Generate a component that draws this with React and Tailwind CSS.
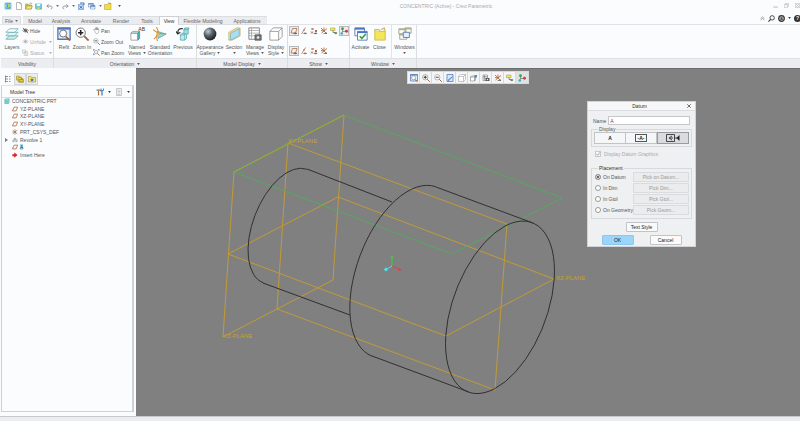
import React, { useState } from "react";

/* ---------- small drawings ---------- */

const Svg = ({ size = 14, className = "", children }) => (
  <svg
    viewBox="0 0 16 16"
    width={size}
    height={size}
    fill="none"
    className={`shrink-0 ${className}`}
    aria-hidden="true"
  >
    {children}
  </svg>
);

const glyphs = {
  app: (
    <>
      <rect x="1" y="1" width="14" height="14" rx="1" fill="#8cc8e4" />
      <path d="M4 3h8v3l-3 2 3 2v3H4l3-5z" fill="#2f8fc4" />
      <path d="M6 4h5l1 4-3 4H6l3-4z" fill="#c9dd4e" />
    </>
  ),
  page: (
    <>
      <path d="M3 1h7l3 3v11H3z" fill="#fff" stroke="#777" />
      <path d="M10 1v3h3" stroke="#777" />
    </>
  ),
  open: (
    <>
      <path d="M1 14V4h5l1 2h6v8z" fill="#d8c64a" stroke="#8f8335" />
      <path d="M1 14l3-6h11l-3 6z" fill="#f6e97b" stroke="#8f8335" />
      <path d="M9 3c2-2 4-1 5 1" stroke="#555" />
    </>
  ),
  save: (
    <>
      <path d="M1 2h14v12H3l-2-2z" fill="#6cc9cf" stroke="#3f8f96" />
      <path d="M4 2h8v5H4z" fill="#f4fbfb" />
      <path d="M5 10h6v4H5z" fill="#e8d44c" />
    </>
  ),
  undo: <path d="M6 3L2 7l4 4M2 7h8c5 0 5 6 1 7" stroke="#888" strokeWidth="2" />,
  redo: <path d="M10 3l4 4-4 4M14 7H6c-5 0-5 6-1 7" stroke="#888" strokeWidth="2" />,
  regen: (
    <>
      <path d="M3 5h10v10H3z" fill="#cfe2fa" stroke="#3f74bd" />
      <path d="M6 2h8v4M5 8l6 5M11 8l-6 5" stroke="#3f74bd" strokeWidth="2" />
    </>
  ),
  windowsBlue: (
    <>
      <path d="M1 3h10v7H1zM5 7h9v7H5z" fill="#fff" stroke="#4773bb" />
      <path d="M1 3h10v2H1zM5 7h9v2H5z" fill="#4773bb" />
    </>
  ),
  closeFolder: (
    <>
      <path d="M1 5h6l1-2h6v12H1z" fill="#f2dd42" stroke="#b19c2c" />
      <path d="M9 1l5 3" stroke="#666" />
    </>
  ),
  layers: (
    <>
      <path d="M1 14l4-4h10l-4 4z" fill="#c9eded" stroke="#59a5aa" strokeWidth=".8" />
      <path d="M1 10l4-4h10l-4 4z" fill="#e2f4f4" stroke="#59a5aa" strokeWidth=".8" />
      <path d="M1 6l4-4h10l-4 4z" fill="#f7fdfd" stroke="#59a5aa" strokeWidth=".8" />
    </>
  ),
  hide: (
    <>
      <path d="M1 8c4-5 10-5 14 0-4 5-10 5-14 0z" fill="#ddd" stroke="#555" />
      <circle cx="8" cy="8" r="3" fill="#444" />
      <path d="M2 2l12 12" stroke="#c8403a" strokeWidth="2" />
    </>
  ),
  unhide: (
    <>
      <path d="M1 8c4-5 10-5 14 0-4 5-10 5-14 0z" stroke="#aaa" />
      <circle cx="8" cy="8" r="3" fill="#aaa" />
    </>
  ),
  status: <path d="M1 2h7v7H1zM5 6h8v9H5zM7 9h4M7 12h4" fill="#f3f3f3" stroke="#aaa" />,
  refit: (
    <>
      <path d="M1 1h14v13H1z" fill="#e4edfa" stroke="#5276bd" strokeWidth="1.5" />
      <path d="M1 2h14" stroke="#5276bd" strokeWidth="2" />
      <circle cx="7" cy="7.5" r="4" fill="#fff" stroke="#666" />
      <path d="M10 11l5 4.5" stroke="#9a6540" strokeWidth="2" />
    </>
  ),
  zoomIn: (
    <>
      <circle cx="6.5" cy="6.5" r="5.3" fill="#fff" stroke="#666" />
      <path d="M6.5 3.5v6M3.5 6.5h6" stroke="#222" strokeWidth="1.8" />
      <path d="M10.5 10.5l5 5" stroke="#9a6540" strokeWidth="2" />
    </>
  ),
  zoomOut: (
    <>
      <circle cx="6.5" cy="6.5" r="5.3" fill="#fff" stroke="#777" />
      <path d="M3.5 6.5h6" stroke="#333" strokeWidth="1.8" />
      <path d="M10.5 10.5l5 5" stroke="#9a6540" strokeWidth="2" />
    </>
  ),
  hand: (
    <path
      d="M4 9L1 6l2-1 2 2V3l2-1v5-6h2v6-5h2v5-3h2v6c0 4-2 5-4 5-3 0-4-2-5-6z"
      fill="#fff"
      stroke="#777"
    />
  ),
  panZoom: (
    <>
      <circle cx="7" cy="7" r="4" fill="#eaf1ff" stroke="#666" />
      <path d="M1 4V1h3M11 1h3v3M1 10v3h3" stroke="#4271c6" strokeWidth="1.5" />
      <path d="M10 10l5 5" stroke="#9a6540" strokeWidth="2" />
    </>
  ),
  named: (
    <>
      <path d="M1 7h8v8H1z" fill="#fff" stroke="#888" strokeWidth=".8" />
      <path d="M1 7l2-2h8L9 7z" fill="#bfe9ea" stroke="#888" strokeWidth=".8" />
      <path d="M9 7l2-2v8l-2 2z" fill="#4fb9bf" stroke="#388a90" strokeWidth=".8" />
    </>
  ),
  orient: (
    <>
      <path d="M5 5l10 3-9 5z" fill="#8ed9dc" stroke="#4fa3a7" strokeWidth=".8" />
      <path d="M4 0l2 5-2 5 1 6M0 3l6 4 9 1M1 14l5-6" stroke="#d98a34" strokeWidth="1.2" />
      <path d="M4 6l4 2-4 3z" fill="#e8b155" />
    </>
  ),
  previous: (
    <>
      <path d="M5 9h5v6H5zM5 9l2-2h5l-2 2M12 7v6l-2 2" fill="#bfe9ea" stroke="#45a2a7" strokeWidth=".8" />
      <path d="M9 3h5v5H9zM9 3l1-2h5l-1 2" fill="#9fe0e3" stroke="#45a2a7" strokeWidth=".8" />
      <path d="M8 2C4 1 2 3 2 7M0 5l2 3 3-2" stroke="#333" strokeWidth="1.4" />
    </>
  ),
  sphere: (
    <>
      <defs>
        <radialGradient id="ball" cx=".35" cy=".3" r=".75">
          <stop offset="0" stopColor="#c3cbd2" />
          <stop offset=".45" stopColor="#5c656e" />
          <stop offset="1" stopColor="#14181c" />
        </radialGradient>
      </defs>
      <circle cx="8" cy="8" r="7.3" fill="url(#ball)" />
    </>
  ),
  section: (
    <>
      <path d="M2 6l9-5h4v9l-9 5H2z" fill="#f4dc8a" stroke="#b9a55c" strokeWidth=".7" />
      <path d="M4 7l10-5v8L4 15z" fill="#a8def2" stroke="#6ba7c4" strokeWidth=".7" />
    </>
  ),
  manage: (
    <>
      <path d="M1 1h12v13H1z" fill="#fff" stroke="#777" />
      <path d="M1 4h12M1 7h12M1 10h12M4 1v13" stroke="#999" strokeWidth=".8" />
      <path d="M8 9h7v6H8z" fill="#777" stroke="#555" />
      <circle cx="11.5" cy="12" r="1.5" fill="#e8e8e8" />
    </>
  ),
  cube: <path d="M1 5h10v10H1zM1 5l4-4h10l-4 4M15 1v10l-4 4" fill="#fff" stroke="#888" strokeWidth=".9" />,
  planes: (
    <>
      <path d="M5 3h9l-3 9H2z" stroke="#b06a3e" strokeWidth="1.5" />
      <path d="M6 13c3-3 6-3 9 0-3 2-6 2-9 0z" fill="#666" />
    </>
  ),
  axis: (
    <>
      <path d="M11 1L3 14" stroke="#b06a3e" strokeWidth="1.5" />
      <path d="M6 13c3-3 6-3 8 0-2 2-5 2-8 0z" fill="#777" />
      <circle cx="8" cy="6" r="1.5" fill="#b06a3e" />
    </>
  ),
  points: (
    <>
      <path d="M3 2l4 4M7 2L3 6M10 6l4 4M14 6l-4 4M2 9l4 4M6 9l-4 4" stroke="#b06a3e" strokeWidth="2" />
      <path d="M7 13c3-3 6-3 8 0-2 2-5 2-8 0z" fill="#777" />
    </>
  ),
  csys: (
    <>
      <path d="M2 2l12 12M14 3L3 12M8 1v7M2 7l6 1" stroke="#b06a3e" strokeWidth="1.8" />
      <path d="M7 13h7M12 10v4" stroke="#666" strokeWidth="1.5" />
    </>
  ),
  annot: (
    <>
      <path d="M1 2h9v5H1z" fill="#f1e96b" stroke="#93903a" />
      <path d="M6 7v4h4" stroke="#666" strokeWidth="1.5" />
      <path d="M8 12c2-3 5-3 7 0-2 3-5 3-7 0z" fill="#5b8a5b" />
    </>
  ),
  spin: (
    <>
      <path d="M5 3v6h7M5 9l-2 4" stroke="#444" strokeWidth="1" />
      <circle cx="5" cy="3.5" r="2.8" fill="#2fa83e" />
      <circle cx="13" cy="8.5" r="2.9" fill="#d93a2e" />
      <circle cx="3.5" cy="13" r="2.6" fill="#36b4c4" />
    </>
  ),
  activate: (
    <>
      <path d="M1 1h11v9H1z" fill="#fff" stroke="#4a76bd" />
      <path d="M1 2h11" stroke="#4a76bd" strokeWidth="2" />
      <path d="M4 5h11v10H4z" fill="#fff" stroke="#4a76bd" />
      <path d="M4 6h11" stroke="#4a76bd" strokeWidth="2" />
      <path d="M6.5 10.5l2.5 2.5 4.5-5" stroke="#2f9d42" strokeWidth="1.8" />
    </>
  ),
  folder: (
    <>
      <path d="M2 5h12v10H2z" fill="#f4e559" stroke="#c3ae35" strokeWidth=".8" />
      <path d="M2 5V3h5l1 2M9 3l4-2 1 4" fill="#f9f1a0" stroke="#a39436" strokeWidth=".8" />
    </>
  ),
  windows: (
    <>
      <path d="M1 2h8v6H1zM8 1h7v6H8zM2 8h8v6H2z" fill="#fff" stroke="#85856a" strokeWidth=".8" />
      <path d="M1 3h8M8 2h7M2 9h8" stroke="#b3b382" strokeWidth="1.5" />
      <path d="M6 6h7v6H6z" fill="#e8f0fd" stroke="#4a76bd" strokeWidth="1" />
    </>
  ),
  repaint: (
    <>
      <path d="M2 1h12v14H2z" fill="#dbe7fb" stroke="#4a76bd" strokeWidth="1.5" />
      <path d="M13 5l-7 8-2 1 1-3z" fill="#7a9fe0" stroke="#4a76bd" />
    </>
  ),
  saved: (
    <>
      <path d="M1 6h8v8H1zM1 6l2-2h8L9 6M11 4v8l-2 2" fill="#fff" stroke="#666" />
      <path d="M9 2h5v5H9z" fill="#5d8aa5" />
    </>
  ),
  viewMgr: (
    <>
      <path d="M2 2h9v11H2zM2 5h9M2 8h9M5 2v11" fill="#fff" stroke="#666" />
      <path d="M7 8h8v6H7z" fill="#555" />
      <circle cx="11" cy="11" r="1.5" fill="#eee" />
    </>
  ),
  tree: <path d="M3 1v14M3 3h5M3 8h5M3 13h5M10 3h3M10 8h3M10 13h3" stroke="#777" strokeWidth="1.6" />,
  folders: (
    <path
      d="M1 2h5l1 2h4v6H1zM4 5h5l1 2h4v6H4zM6 9h9v6H6z"
      fill="#f0dc45"
      stroke="#8d8032"
    />
  ),
  favorite: (
    <>
      <path d="M1 3h5l1 2h8v9H1z" fill="#f5e766" stroke="#8d8032" />
      <path d="M8 6l1.5 2.5 2.5.5-2 2 .5 2L8 12l-2.5 1 .5-2-2-2 2.5-.5z" fill="#4273c4" />
    </>
  ),
  tools: (
    <>
      <path d="M5 6v9" stroke="#b86a35" strokeWidth="2.4" />
      <path d="M1 4h7l2 2" stroke="#777" strokeWidth="2.5" />
      <path d="M12 6v9" stroke="#4a86c6" strokeWidth="2.8" />
      <path d="M10 1v4h5V1" stroke="#4a86c6" strokeWidth="2" />
    </>
  ),
  sheet: <path d="M3 1h10v14H3zM5 4h6M5 7h6M5 10h6M5 13h6" fill="#fafafa" stroke="#999" />,
  part: (
    <>
      <path d="M2 4h10v11H2z" fill="#63d3d9" stroke="#3d9499" />
      <path d="M2 4l2-2h10l-2 2M14 2v11l-2 2" fill="#b8f0f1" stroke="#3d9499" />
    </>
  ),
  plane: <path d="M6 3h9l-4 10H1z" stroke="#a8633b" strokeWidth="2" />,
  csysTree: <path d="M2 3l12 10M14 3L2 13M8 1v14M1 8h9" stroke="#9a6a4c" strokeWidth="1.8" />,
  revolve: (
    <>
      <path d="M2 13V8c3-5 9-5 12 0v5h-3V9c-2-2-4-2-6 0v4z" fill="#b7dfe2" stroke="#679699" />
      <path d="M8 1v13" stroke="#666" />
    </>
  ),
  insert: <path d="M5 1h5v5h5l-7 9-7-9h4z" fill="#d22" transform="rotate(-90 8 8)" />,
  search: (
    <>
      <circle cx="9.5" cy="6.5" r="5" stroke="#333" strokeWidth="2" />
      <path d="M6 10l-5 5" stroke="#333" strokeWidth="2.5" />
    </>
  ),
  learn: (
    <>
      <circle cx="8" cy="8" r="6.5" fill="#bbb" stroke="#333" strokeWidth="2.5" />
      <path d="M4 7l4-2 4 2-4 2zM5 9v2h6V9" fill="#444" />
    </>
  ),
};

const Icon = ({ name, size, className }) => (
  <Svg size={size} className={className}>
    {glyphs[name]}
  </Svg>
);

const Caret = ({ className = "" }) => (
  <svg viewBox="0 0 4 3" width="3" height="2" className={`inline-block shrink-0 ${className}`} aria-hidden="true">
    <path d="M0 0h4L2 3z" fill="currentColor" />
  </svg>
);

/* ---------- title bar and tabs ---------- */

const TitleBar = () => (
  <header className="relative flex h-4 items-start justify-between pl-1">
    <div className="flex h-3 items-center gap-[2px]">
      <Icon name="app" size={8} className="mr-px" />
      <button aria-label="New"><Icon name="page" size={8} /></button>
      <button aria-label="Open"><Icon name="open" size={8} /></button>
      <button aria-label="Save"><Icon name="save" size={7} /></button>
      <button aria-label="Undo" className="ml-[2px] flex items-center gap-[3px]">
        <Icon name="undo" size={7} /><Caret />
      </button>
      <button aria-label="Redo" className="ml-px flex items-center gap-[3px]">
        <Icon name="redo" size={7} /><Caret />
      </button>
      <button aria-label="Regenerate"><Icon name="regen" size={8} /></button>
      <button aria-label="Windows" className="ml-px flex items-center gap-[3px]">
        <Icon name="windowsBlue" size={8} /><Caret />
      </button>
      <button aria-label="Close window"><Icon name="closeFolder" size={8} /></button>
      <button aria-label="Customize toolbar" className="ml-1 flex items-center text-[#444]"><Caret /></button>
    </div>
    <h1 className="absolute inset-x-0 top-[3px] ml-[92px] text-center text-[#aaa]">
      CONCENTRIC (Active) - Creo Parametric
    </h1>
    <div className="flex items-center gap-[6px] pt-[3px] text-[#b5b5b8]">
      <button aria-label="Minimize">
        <Svg size={5}><path d="M1 13h14" stroke="currentColor" strokeWidth="3" /></Svg>
      </button>
      <button aria-label="Restore">
        <Svg size={5}><path d="M5 5V1h10v9h-4M1 5h10v10H1z" stroke="currentColor" strokeWidth="2" /></Svg>
      </button>
      <button aria-label="Close">
        <Svg size={5}><path d="M1 1h14v14H1zM3 3l10 10M13 3L3 13" stroke="currentColor" strokeWidth="2" /></Svg>
      </button>
    </div>
  </header>
);

const tabs = [
  ["Model", "w-6"],
  ["Analysis", "w-7"],
  ["Annotate", "w-8"],
  ["Render", "w-7"],
  ["Tools", "w-6"],
  ["View", "w-5"],
  ["Flexible Modeling", "w-12"],
  ["Applications", "w-10"],
];

const TabStrip = () => {
  const [active, setActive] = useState("View");
  return (
    <nav className="flex h-[9px] items-stretch justify-between border-b border-[#e2e3e6] pl-[2px]">
      <div className="flex">
        <button className="mr-[2px] flex w-[19px] items-center justify-center gap-[2px] border border-b-0 border-[#dcdde0] bg-[#ebecef]">
          File <Caret />
        </button>
        {tabs.map(([name, width]) => (
          <button
            key={name}
            onClick={() => setActive(name)}
            className={`${width} -mb-px whitespace-nowrap border-t text-center ${
              active === name
                ? "border-x border-[#cfd0d3] bg-[#fbfcfe] text-[#333]"
                : "border-b border-[#dcdde0] bg-[#ebecef]"
            }`}
          >
            {name}
          </button>
        ))}
      </div>
      <div className="-mt-1 flex items-center gap-[3px] text-[#333]">
        <button aria-label="Minimize ribbon">
          <Svg size={5}><path d="M2 8l6-5 6 5M2 13l6-5 6 5" stroke="#777" strokeWidth="2" /></Svg>
        </button>
        <button aria-label="Search"><Icon name="search" size={7} /></button>
        <button aria-label="Learning" className="flex items-center gap-[3px]">
          <Icon name="learn" size={7} /><Caret />
        </button>
        <button aria-label="Help" className="-mr-px size-[7px] rounded-full bg-[#333] text-center font-bold text-white">?</button>
      </div>
    </nav>
  );
};

/* ---------- ribbon ---------- */

const Big = ({ icon, width, lines, caret, extra }) => (
  <button className={`${width} flex flex-col items-center pt-[2px]`}>
    <span className="relative mb-[3px]">
      <Icon name={icon} size={14} />
      {extra}
    </span>
    {lines.map((line, i) => (
      <span key={line} className="flex items-center gap-[2px] whitespace-nowrap">
        {line}
        {caret && lines.length > 1 && i === lines.length - 1 && <Caret />}
      </span>
    ))}
    {caret && lines.length === 1 && <Caret className="mt-[2px]" />}
  </button>
);

const Small = ({ icon, label, caret, disabled }) => (
  <button
    disabled={disabled}
    className={`flex items-center gap-px whitespace-nowrap ${disabled ? "text-[#aaa]" : ""}`}
  >
    <Icon name={icon} size={7} />
    {label}
    {caret && <Caret className="ml-auto" />}
  </button>
);

const Group = ({ title, width, caret, children }) => (
  <section className={`${width} flex shrink-0 flex-col border-r border-[#dcdde0]`}>
    <div className="flex h-[33px] justify-center">{children}</div>
    <h2 className="flex h-[10px] items-center justify-center gap-[3px] border-t border-[#e0e1e4] bg-[#ecedf0]">
      {title}
      {caret && <Caret />}
    </h2>
  </section>
);

const showTop = ["planes", "axis", "points", "csys", "annot", "spin"];
const showBottom = ["planes", "axis", "points", "csys"];

const ShowButton = ({ icon, pressed }) => (
  <button
    aria-label={icon}
    aria-pressed={pressed}
    className={`flex size-[10px] items-center justify-center ${
      pressed ? "border border-[#b8b9bc] bg-[#eceef1]" : ""
    }`}
  >
    <Icon name={icon} size={8} />
  </button>
);

const Ribbon = () => (
  <div className="flex pl-px text-[#555]">
    <Group title="Visibility" width="w-[53px]">
      <Big icon="layers" width="w-5" lines={["Layers"]} />
      <div className="flex w-[30px] flex-col justify-between py-[2px]">
        <Small icon="hide" label="Hide" />
        <Small icon="unhide" label="Unhide" caret disabled />
        <Small icon="status" label="Status" caret disabled />
      </div>
    </Group>
    <Group title="Orientation" width="w-[143px]" caret>
      <Big icon="refit" width="w-4" lines={["Refit"]} />
      <Big icon="zoomIn" width="w-5" lines={["Zoom In"]} />
      <div className="flex w-[34px] flex-col justify-between py-[2px] pl-px">
        <Small icon="hand" label="Pan" />
        <Small icon="zoomOut" label="Zoom Out" />
        <Small icon="panZoom" label="Pan Zoom" />
      </div>
      <Big
        icon="named"
        width="w-[22px]"
        lines={["Named", "Views"]}
        caret
        extra={<span className="absolute -right-px -top-px text-[#333]">AB</span>}
      />
      <Big icon="orient" width="w-6" lines={["Standard", "Orientation"]} />
      <Big icon="previous" width="w-[22px]" lines={["Previous"]} />
    </Group>
    <Group title="Model Display" width="w-[91px]" caret>
      <Big icon="sphere" width="w-[26px]" lines={["Appearance", "Gallery"]} caret />
      <Big icon="section" width="w-[22px]" lines={["Section"]} caret />
      <Big icon="manage" width="w-5" lines={["Manage", "Views"]} caret />
      <Big icon="cube" width="w-[22px]" lines={["Display", "Style"]} caret />
    </Group>
    <Group title="Show" width="w-[62px]" caret>
      <div className="flex flex-col justify-between pb-[2px] pt-px">
        <div className="flex">
          {showTop.map((name, i) => (
            <ShowButton key={name} icon={name} pressed={i === 0 || i === 5} />
          ))}
        </div>
        <div className="flex">
          {showBottom.map((name, i) => (
            <ShowButton key={name} icon={name} pressed={i === 0} />
          ))}
        </div>
      </div>
    </Group>
    <Group title="Window" width="w-[67px]" caret>
      <Big icon="activate" width="w-5" lines={["Activate"]} />
      <Big icon="folder" width="w-[18px]" lines={["Close"]} />
      <div className="mx-[2px] border-l border-[#e2e3e6]" />
      <Big icon="windows" width="w-[22px]" lines={["Windows"]} caret />
    </Group>
    <div className="flex flex-1 flex-col justify-end">
      <div className="h-[10px] border-t border-[#e0e1e4] bg-[#ecedf0]" />
    </div>
  </div>
);

/* ---------- model tree ---------- */

const treeItems = [
  { icon: "plane", label: "YZ-PLANE" },
  { icon: "plane", label: "XZ-PLANE" },
  { icon: "plane", label: "XY-PLANE" },
  { icon: "csysTree", label: "PRT_CSYS_DEF" },
  { icon: "revolve", label: "Revolve 1", expandable: true },
  { icon: "plane", label: "A", selected: true },
  { icon: "insert", label: "Insert Here" },
];

const ModelTree = () => (
  <aside className="flex w-[136px] shrink-0 flex-col bg-[#fbfcfe] pb-1 pl-px pr-[2px] pt-[5px] text-[#555]">
    <div className="flex h-3">
      <button aria-label="Model Tree" className="flex w-[13px] items-center justify-center">
        <Icon name="tree" size={8} />
      </button>
      <button aria-label="Folder Browser" className="flex w-3 items-center justify-center border border-[#d4d5d8] bg-[#ebecef]">
        <Icon name="folders" size={8} />
      </button>
      <button aria-label="Favorites" className="flex w-3 items-center justify-center border border-[#d4d5d8] bg-[#ebecef]">
        <Icon name="favorite" size={8} />
      </button>
    </div>
    <div className="flex-1 border border-r-2 border-[#d0d1d4] border-t-[#e2e3e6]">
      <div className="flex h-3 items-center border-b border-[#dcdde0] pl-2 pr-[2px] text-[#333]">
        <h2 className="mr-auto">Model Tree</h2>
        <button aria-label="Settings" className="mr-1 flex items-center gap-1">
          <Icon name="tools" size={8} /><Caret />
        </button>
        <button aria-label="Show" className="flex items-center gap-1">
          <Icon name="sheet" size={8} /><Caret />
        </button>
      </div>
      <ul className="flex h-[60px] flex-col justify-between">
        <li className="flex items-center gap-[2px] pl-[2px]">
          <Icon name="part" size={6} /> CONCENTRIC.PRT
        </li>
        {treeItems.map(({ icon, label, expandable, selected }) => (
          <li key={label} className="flex items-center gap-[2px] pl-[3px]">
            <span className="flex w-[5px]">
              {expandable && (
                <svg viewBox="0 0 3 4" width="3" height="4" aria-hidden="true">
                  <path d="M0 0v4l3-2z" fill="#777" />
                </svg>
              )}
            </span>
            <Icon name={icon} size={6} />
            <span className={selected ? "bg-[#a5d8f6] text-[#234]" : ""}>{label}</span>
          </li>
        ))}
      </ul>
    </div>
  </aside>
);

/* ---------- graphics area ---------- */

// Unit circle mapped on to the end face of the shaft
const FACE = "54.2 -28.3 5.5 -81.5";
const STEP = "37 -19 3.7 -54.6";
const HALF = "M.5 .866A1 1 0 0 1 -.5 -.866";

const Model = () => (
  <svg
    viewBox="136 69 664 347"
    className="absolute inset-0 h-full w-full"
    fill="none"
    strokeWidth="1"
    role="img"
    aria-label="Part model"
  >
    <g stroke="#c19b38">
      <path d="M234 172L344 115L333 280L223 337z" />
      <path d="M288 143L507 224L495 390L277 309z" />
      <path d="M228 254L338 197L554 279L446 336z" />
    </g>
    <path d="M344 115L562 198L452 254L234 172" stroke="#55a860" />
    <path d="M234 172L344 115" stroke="#7fb23a" />
    <g stroke="#303030">
      <path d="M307 169L392 202M263 283L350 315" />
      <path d="M436 187L533 223M372 356L469 392" />
      <path d={HALF} transform={`matrix(${STEP} 285 226)`} vectorEffect="non-scaling-stroke" />
      <path d={HALF} transform={`matrix(${FACE} 404 271.5)`} vectorEffect="non-scaling-stroke" />
      <circle r="1" transform={`matrix(${FACE} 500 307.3)`} vectorEffect="non-scaling-stroke" />
    </g>
    <g strokeWidth="1">
      <path d="M392 266V258" stroke="#3bd23f" />
      <path d="M392 266l7 3" stroke="#dc4242" />
      <path d="M392 266l-5 3" stroke="#4fdfe8" />
      <path d="M392 255l1.5 3h-3z" fill="#3bd23f" />
      <path d="M402 270l-4 1 1-3z" fill="#dc4242" />
      <circle cx="386" cy="269.5" r="1.7" fill="#4fdfe8" />
    </g>
    <g fill="#c9a02c" className="text-[6px]">
      <text x="288" y="143">XY-PLANE</text>
      <text x="223" y="338">YZ-PLANE</text>
      <text x="556" y="280">XZ-PLANE</text>
    </g>
  </svg>
);

const viewTools = [
  "refit", "zoomIn", "zoomOut", "repaint", "cube", "saved", "viewMgr", "csys", "annot", "spin",
];

const ViewToolbar = () => (
  <div className="absolute left-1/2 top-[2px] flex -translate-x-1/2 border border-[#d8d9dc] bg-[#f4f5f7]">
    {viewTools.map((name) => (
      <button
        key={name}
        aria-label={name}
        className={`flex h-[11px] w-3 items-center justify-center border-r border-[#d8d9dc] last:border-r-0 ${
          name === "spin" ? "bg-[#dfe1e4]" : ""
        }`}
      >
        <Icon name={name} size={8} />
      </button>
    ))}
  </div>
);

const placements = [
  ["On Datum", "Pick on Datum..."],
  ["In Dim", "Pick Dim..."],
  ["In Gtol", "Pick Gtol..."],
  ["On Geometry", "Pick Geom..."],
];

const DatumDialog = () => {
  const [name, setName] = useState("A");
  const [placement, setPlacement] = useState("On Datum");
  const [graphics, setGraphics] = useState(true);
  return (
    <div
      role="dialog"
      aria-label="Datum"
      className="absolute right-[104px] top-[32px] w-[109px] border border-[#d2d3d6] bg-[#eff0f2] text-[#555]"
    >
      <div className="flex h-[9px] items-center border-b border-[#dcdde0] bg-[#f6f7f9] px-1">
        <h2 className="flex-1 text-center text-[#333]">Datum</h2>
        <button aria-label="Close dialog">
          <Svg size={4}><path d="M1 1l14 14M15 1L1 15" stroke="#444" strokeWidth="3" /></Svg>
        </button>
      </div>
      <div className="px-[3px] pb-px pt-[5px]">
        <div className="flex items-center gap-[2px] px-[2px]">
          <label htmlFor="datum-name">Name</label>
          <input
            id="datum-name"
            value={name}
            onChange={(e) => setName(e.target.value)}
            className="h-[9px] min-w-0 flex-1 border border-[#c6c7ca] bg-white px-px"
          />
        </div>
        <fieldset className="mt-[2px] border border-[#d8d9dc] px-[2px] pb-[2px]">
          <legend className="ml-1 px-px leading-[5px]">Display</legend>
          <div className="flex text-[#222]">
            <button className="h-3 flex-1 border border-[#c2c3c6] bg-[#f5f6f8] font-bold">A</button>
            <button aria-label="-A-" className="flex h-3 flex-1 items-center justify-center border border-l-0 border-[#c2c3c6] bg-[#f5f6f8] font-bold">
              <span className="border border-[#555] px-[2px] leading-[6px]">-A-</span>
            </button>
            <button aria-label="Tag" aria-pressed="true" className="flex h-3 flex-1 items-center justify-center border border-[#999a9d] bg-[#d9dbde]">
              <svg viewBox="0 0 14 8" width="14" height="8" fill="none" stroke="#222" strokeWidth=".8" aria-hidden="true">
                <path d="M.5 .5h8v7h-8zM8.5 4h3" />
                <path d="M6 2L3 4l3 2M4 4h3" />
                <path d="M13.5 1v6L10.500 4z" fill="#222" stroke="none" />
              </svg>
            </button>
          </div>
        </fieldset>
        <label className="mt-1 flex items-center gap-[3px] pl-1 text-[#aaa]">
          <span className="relative flex">
            <input
              type="checkbox"
              checked={graphics}
              onChange={() => setGraphics(!graphics)}
              disabled
              className="size-[6px] appearance-none border border-[#c8c9cc] bg-[#f6f6f7]"
            />
            {graphics && (
              <svg viewBox="0 0 6 6" className="absolute inset-0 size-[6px]" fill="none" aria-hidden="true">
                <path d="M1.5 3l1.2 1.3L5 1.3" stroke="#aaa" />
              </svg>
            )}
          </span>
          Display Datum Graphics
        </label>
        <fieldset className="mt-2 border border-[#d8d9dc] px-[2px] pb-[3px]">
          <legend className="ml-1 px-px leading-[6px] text-[#333]">Placement</legend>
          <div className="flex flex-col gap-px pt-px">
            {placements.map(([label, action]) => (
              <div key={label} className="flex items-center justify-between pl-px">
                <label className="flex items-center gap-[2px] whitespace-nowrap">
                  <input
                    type="radio"
                    name="placement"
                    checked={placement === label}
                    onChange={() => setPlacement(label)}
                    className="size-[6px] shrink-0 appearance-none rounded-full border border-[#999] bg-white checked:bg-[#333] checked:shadow-[inset_0_0_0_1px_#fff]"
                  />
                  {label}
                </label>
                <button disabled className="h-[10px] w-14 shrink-0 border border-[#dadbde] bg-[#ebecee] text-[#999]">
                  {action}
                </button>
              </div>
            ))}
          </div>
        </fieldset>
        <div className="mt-[3px] flex justify-center text-[#222]">
          <button className="h-[10px] w-8 rounded-[1px] border border-[#c2c3c6] bg-[#fafafb]">Text Style</button>
        </div>
        <div className="mt-[3px] flex justify-center gap-4 text-[#222]">
          <button className="h-[10px] w-8 rounded-[1px] border border-[#8cc8ee] bg-[#9bd6fa]">OK</button>
          <button className="h-[10px] w-8 rounded-[1px] border border-[#c2c3c6] bg-[#fafafb]">Cancel</button>
        </div>
      </div>
    </div>
  );
};

const App = () => {
  return (
    <div className="flex h-screen flex-col overflow-hidden bg-[#fbfcfe] font-['Liberation_Sans',Arial,sans-serif] text-[5px] leading-[6px] text-[#666]">
      <TitleBar />
      <TabStrip />
      <Ribbon />
      <div className="flex min-h-0 flex-1">
        <ModelTree />
        <main className="relative flex-1 border-t border-[#6c6c6c] bg-[#808080]">
          <Model />
          <ViewToolbar />
          <DatumDialog />
        </main>
      </div>
      <footer className="h-[5px] border-t border-[#c8c9cb] bg-[#ecedf0]" />
    </div>
  );
};

export default App;
